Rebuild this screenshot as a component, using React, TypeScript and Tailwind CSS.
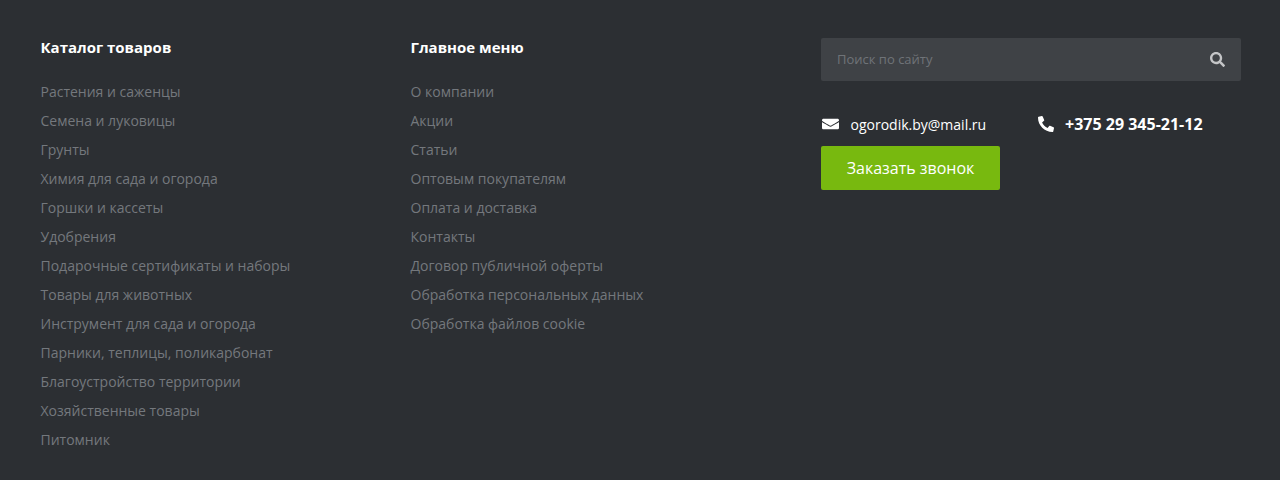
import React from "react";
const a = ["Растения и саженцы","Семена и луковицы","Грунты","Химия для сада и огорода","Горшки и кассеты","Удобрения","Подарочные сертификаты и наборы","Товары для животных","Инструмент для сада и огорода","Парники, теплицы, поликарбонат","Благоустройство территории","Хозяйственные товары","Питомник"];
const b = ["О компании","Акции","Статьи","Оптовым покупателям","Оплата и доставка","Контакты","Договор публичной оферты","Обработка персональных данных","Обработка файлов cookie"];
function Col({ title, items, w }: { title: string; items: string[]; w: string }) {
  return (
    <div className={w}>
      <div className="text-[15px] leading-[18px] font-bold text-white whitespace-nowrap">{title}</div>
      <ul className="mt-[21px]">
        {items.map((t) => (
          <li key={t} className="h-[29px] text-[14px] leading-[29px] text-[#74787d] whitespace-nowrap">{t}</li>
        ))}
      </ul>
    </div>
  );
}
export default function App() {
  return (
    <div className="h-[480px] w-[1280px] overflow-hidden bg-[#2c2f33] flex pl-[40.5px] pt-[38px] font-['Open_Sans',sans-serif]">
      <Col title="Каталог товаров" items={a} w="w-[370px]" />
      <Col title="Главное меню" items={b} w="w-[410.5px]" />
      <div className="w-[420px]">
        <div className="h-[43px] rounded-[2px] bg-[#3f4246] flex items-center justify-between pl-[16px] pr-[16px]">
          <span className="text-[13px] text-[#6f7378]">Поиск по сайту</span>
          <svg width="15" height="15" viewBox="0 0 512 512" fill="#c4c5c7"><path d="M505 442.700L405.300 343c-4.500-4.500-10.600-7-17-7H372c27.600-35.300 44-79.700 44-128C416 93.100 322.900 0 208 0S0 93.100 0 208s93.100 208 208 208c48.300 0 92.700-16.400 128-44v16.300c0 6.400 2.500 12.500 7 17l99.700 99.700c9.400 9.400 24.600 9.400 33.900 0l28.300-28.300c9.400-9.400 9.400-24.600.1-34zM208 336c-70.700 0-128-57.200-128-128 0-70.700 57.200-128 128-128 70.700 0 128 57.200 128 128 0 70.700-57.200 128-128 128z"/></svg>
        </div>
        <div className="flex items-center mt-[33px] h-[20px]">
          <svg className="ml-[1px]" width="17" height="14" viewBox="0 0 512 512" fill="#fff" preserveAspectRatio="none"><path d="M502.300 190.800c3.900-3.100 9.700-.2 9.700 4.700V400c0 26.500-21.500 48-48 48H48c-26.500 0-48-21.500-48-48V195.600c0-5 5.700-7.800 9.700-4.700 22.400 17.400 52.100 39.500 154.100 113.600 21.100 15.400 56.700 47.800 92.200 47.600 35.700.3 72-32.800 92.300-47.600 102-74.100 131.600-96.300 154-113.700zM256 320c23.200.4 56.600-29.200 73.400-41.400 132.700-96.300 142.800-104.700 173.400-128.700 5.800-4.500 9.200-11.500 9.200-18.900v-19c0-26.500-21.500-48-48-48H48C21.500 64 0 85.500 0 112v19c0 7.400 3.400 14.300 9.200 18.900 30.600 23.900 40.700 32.400 173.400 128.700 16.800 12.200 50.200 41.800 73.400 41.400z"/></svg>
          <span className="ml-[11.5px] w-[187.5px] text-[14px] text-white whitespace-nowrap">ogorodik.by@mail.ru</span>
          <svg className="-scale-x-100" width="16" height="16" viewBox="0 0 512 512" fill="#fff"><path d="M493.400 24.600l-104-24c-11.300-2.600-22.900 3.300-27.500 13.900l-48 112c-4.200 9.800-1.400 21.300 6.900 28l60.600 49.600c-36 76.700-98.900 140.500-177.200 177.200l-49.600-60.600c-6.800-8.300-18.200-11.100-28-6.900l-112 48C3.900 366.500-2 378.100.6 389.400l24 104C27.100 504.200 36.700 512 48 512c256.100 0 464-207.500 464-464 0-11.200-7.700-20.900-18.600-23.400z"/></svg>
          <span className="ml-[11px] text-[16px] font-bold text-white whitespace-nowrap">+375 29 345-21-12</span>
        </div>
        <div className="mt-[12px] w-[179px] h-[44px] rounded-[2px] bg-[#78b90f] flex items-center justify-center text-[16px] text-white">Заказать звонок</div>
      </div>
    </div>
  );
}
